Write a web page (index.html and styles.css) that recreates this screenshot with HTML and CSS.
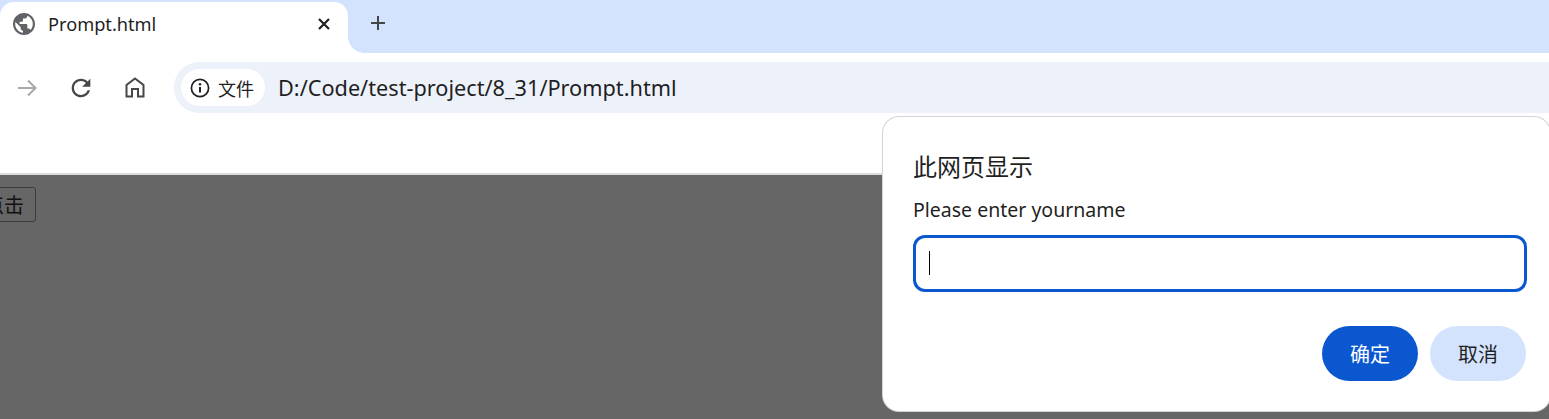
FILE: index.html
```html
<!DOCTYPE html>
<html lang="zh-CN">
<head>
  <meta charset="UTF-8" />
  <title>Prompt.html</title>
  <link rel="stylesheet" href="styles.css">
</head>
<body>
  <header class="tabstrip">
    <div class="tab">
      <svg class="tab-icon" viewBox="2 2 20 20" width="22" height="22">
        <path d="M12 2C6.48 2 2 6.48 2 12s4.48 10 10 10 10-4.48 10-10S17.52 2 12 2zm-1 17.930c-3.950-.49-7-3.850-7-7.930 0-.62.08-1.210.21-1.790L9 15v1c0 1.100.9 2 2 2v1.930zm6.900-2.540c-.26-.81-1-1.390-1.900-1.390h-1v-3c0-.55-.45-1-1-1H8v-2h2c.55 0 1-.45 1-1V7h2c1.100 0 2-.9 2-2v-.41c2.930 1.190 5 4.060 5 7.410 0 2.080-.8 3.970-2.100 5.390z" fill="#5f6368"/>
      </svg>
      <span class="tab-title">Prompt.html</span>
      <svg class="tab-close" viewBox="0 0 14 14" width="14" height="14">
        <path d="M2 2l10 10M12 2L2 12" stroke="#1f1f1f" stroke-width="2.200" fill="none"/>
      </svg>
    </div>
    <svg class="new-tab" viewBox="0 0 16 16" width="16" height="16">
      <path d="M8 1v14M1 8h14" stroke="#444746" stroke-width="2" fill="none"/>
    </svg>
  </header>

  <nav class="toolbar">
    <div class="nav-btn">
      <svg viewBox="0 0 20 20" width="20" height="20">
        <path d="M1 10h17.500M11 2.500l7.500 7.500-7.500 7.500" stroke="#a8a9ab" stroke-width="2" fill="none"/>
      </svg>
    </div>
    <div class="nav-btn">
      <svg viewBox="0 0 24 24" width="28" height="28">
        <path d="M17.650 6.350C16.200 4.900 14.210 4 12 4c-4.420 0-7.990 3.580-7.990 8s3.570 8 7.990 8c3.730 0 6.840-2.550 7.730-6h-2.080c-.82 2.330-3.040 4-5.650 4-3.310 0-6-2.690-6-6s2.690-6 6-6c1.660 0 3.140.69 4.220 1.780L13 11h7V4l-2.350 2.350z" fill="#474747"/>
      </svg>
    </div>
    <div class="nav-btn">
      <svg viewBox="0 0 20 21" width="20" height="21">
        <path d="M1.500 19.500V8L10 1.500 18.500 8v11.500h-5.500v-7.500H7v7.500z" stroke="#474747" stroke-width="2" fill="none"/>
      </svg>
    </div>
    <div class="omnibox">
      <div class="chip">
        <svg viewBox="0 0 20 20" width="20" height="20">
          <circle cx="10" cy="10" r="8.600" stroke="#1f1f1f" stroke-width="1.700" fill="none"/>
          <path d="M10 9v5.500" stroke="#1f1f1f" stroke-width="2" fill="none"/>
          <circle cx="10" cy="6.300" r="1.200" fill="#1f1f1f"/>
        </svg>
        <span>文件</span>
      </div>
      <span class="url">D:/Code/test-project/8_31/Prompt.html</span>
    </div>
  </nav>

  <div class="bookmarks"></div>

  <main class="page">
    <button class="page-btn">点击</button>
  </main>

  <section class="dialog">
    <h2>此网页显示</h2>
    <p>Please enter yourname</p>
    <div class="field"><i class="caret"></i></div>
    <div class="actions">
      <button class="btn primary">确定</button>
      <button class="btn">取消</button>
    </div>
  </section>
</body>
</html>
```

FILE: styles.css
```css
html, body { height: 100%; }
body { margin: 0; height: 419px; overflow: hidden; display: flex; flex-direction: column; position: relative; background: #fff; color: #1f1f1f; font-family: "Noto Sans", "Noto Sans CJK SC", sans-serif; }

.tabstrip { height: 51px; padding-top: 2px; background: #d3e3fd; display: flex; align-items: flex-start; flex-shrink: 0; }
.tab { width: 348px; height: 51px; box-sizing: border-box; background: #fff; border-radius: 14px 14px 0 0; padding: 0 17px 8px 13px; display: flex; align-items: center; position: relative; }
.tab::after { content: ""; position: absolute; left: 348px; bottom: 0; width: 16px; height: 16px; background: radial-gradient(circle at 100% 0, transparent 15.500px, #fff 16px); }
.tab-icon { flex-shrink: 0; }
.tab-title { margin-left: 13px; flex: 1; font-size: 18.200px; color: #1f1f1f; }
.new-tab { margin: 13px 0 0 22px; }

.toolbar { height: 64px; box-sizing: border-box; padding-top: 9px; display: flex; align-items: flex-start; flex-shrink: 0; }
.nav-btn { flex: 0 0 54px; height: 51px; display: flex; align-items: center; justify-content: center; }
.omnibox { flex: 1; height: 51px; margin-left: 12px; padding-left: 7px; background: #edf2fa; border-radius: 25px 0 0 25px; display: flex; align-items: center; }
.chip { width: 84px; height: 37px; box-sizing: border-box; padding-left: 9px; background: #fff; border-radius: 19px; display: flex; align-items: center; gap: 8px; font-size: 18px; }
.url { margin-left: 13px; font-size: 21.700px; color: #1f1f1f; }

.bookmarks { height: 56px; border-bottom: 2px solid #dcdcdc; flex-shrink: 0; }

.page { flex: 1; background: #666; padding-top: 12px; }
.page-btn { display: block; width: 64px; height: 35px; margin-left: -28px; padding: 0; background: #666; border: 1px solid #3c3c3c; border-radius: 3px; color: #111; font: 20px "Noto Sans CJK SC", sans-serif; }

.dialog { position: absolute; left: 883px; top: 117px; width: 667px; height: 294px; box-sizing: border-box; padding: 34px 23px 0 30px; background: #fff; border-radius: 16px; box-shadow: 0 0 0 1px #d4d4d4; }
.dialog h2 { margin: 0; font-size: 24px; font-weight: 400; line-height: 32px; }
.dialog p { margin: 12px 0 0; font-size: 19.500px; line-height: 30px; }
.field { height: 57px; box-sizing: border-box; margin-top: 10px; padding: 13px 0 0 13px; border: 3px solid #0b57d0; border-radius: 12px; }
.caret { display: block; width: 1px; height: 24px; background: #000; }
.actions { display: flex; justify-content: flex-end; gap: 12px; margin-top: 34px; padding-right: 1px; }
.btn { width: 96px; height: 55px; padding: 0; border: none; border-radius: 28px; background: #d3e3fd; color: #1f1f1f; font: 20px "Noto Sans CJK SC", sans-serif; }
.primary { background: #0b57d0; color: #fff; }
```
